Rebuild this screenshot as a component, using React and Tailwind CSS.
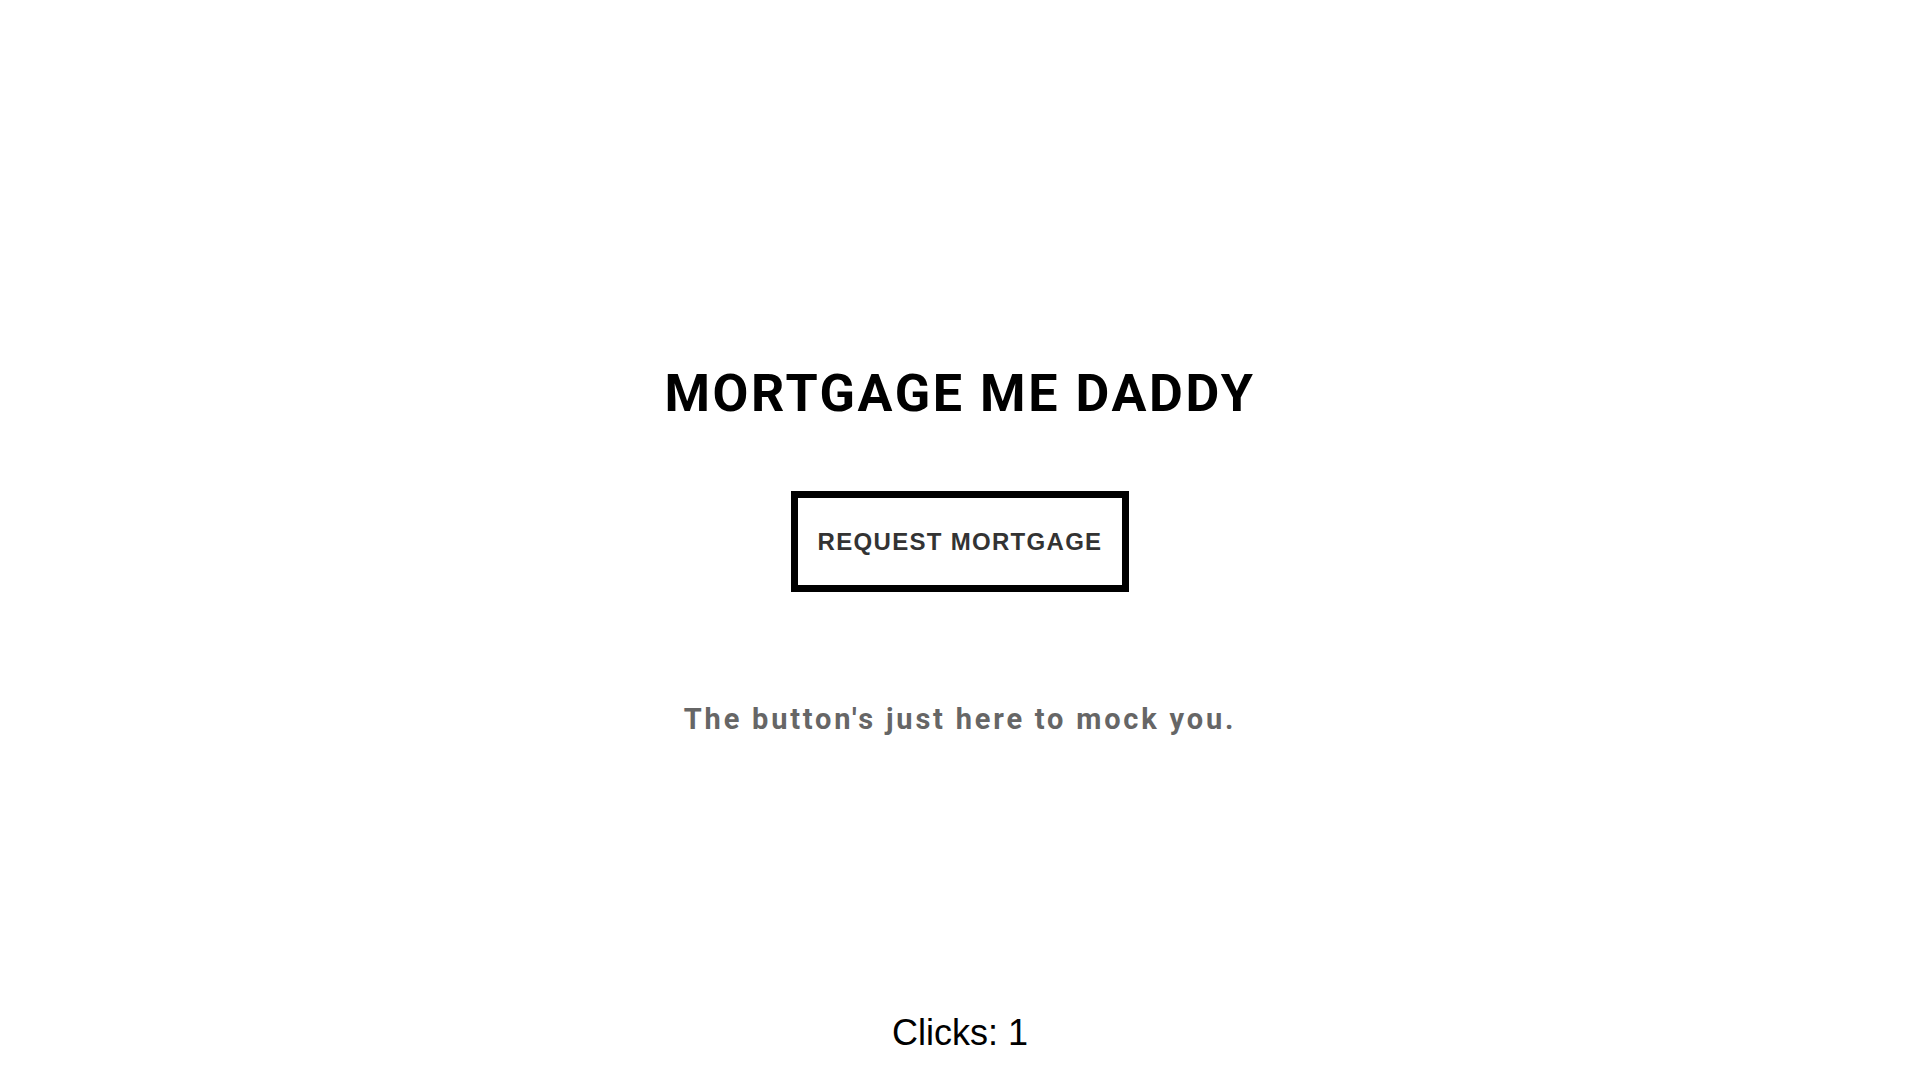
import React, { useState } from 'react';

const App = () => {
    const [clicks, setClicks] = useState(1);

    return (
        <main className="w-full min-h-screen bg-white flex flex-col items-center pt-[362px]">
            <h1 className="font-['Roboto',sans-serif] font-bold text-[52px] leading-[64px] tracking-[2.6px] text-black">
                MORTGAGE ME DADDY
            </h1>

            <button
                type="button"
                onClick={() => setClicks(clicks + 1)}
                className="mt-[65px] border-[7px] border-black bg-white px-5 py-[30px] font-['Liberation_Sans',Arial,sans-serif] font-bold text-[24px] leading-[27px] tracking-[1.3px] text-[#333333] uppercase">
                Request Mortgage
            </button>

            <p className="mt-[110px] font-['Roboto',sans-serif] font-bold text-[29px] leading-[34px] tracking-[2.8px] text-[#666666]">
                The button's just here to mock you.
            </p>

            <div className="mt-[276px] font-['Liberation_Sans',Arial,sans-serif] text-[36px] leading-[41px] text-black">
                Clicks: {clicks}
            </div>
        </main>
    );
};

export default App;
